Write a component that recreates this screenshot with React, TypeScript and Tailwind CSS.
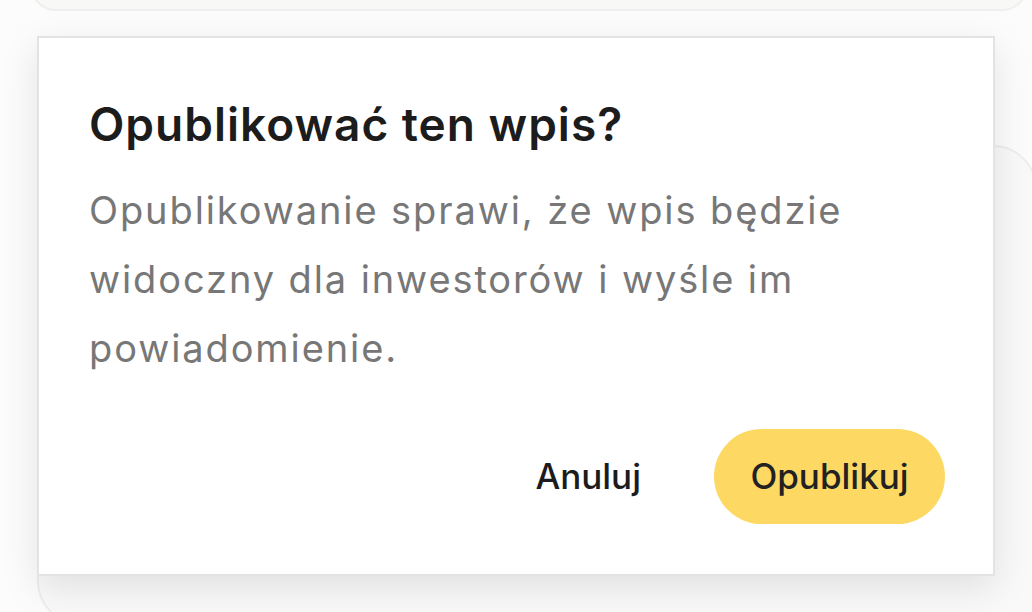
import React from 'react';

const font = { fontFamily: 'Inter, "Noto Sans", sans-serif' };

export default function App() {
  return (
    <div className="relative w-[1032px] h-[612px] overflow-hidden bg-[#fafafa]" style={font}>
      {/* Page behind the dialog */}
      <div className="flex flex-col">
        <div className="mt-[-80px] ml-[30px] w-[998px] h-[91px] rounded-b-[26px] border-2 border-[#e4e4e2] bg-[#f4f4f2]" />
        <div className="mt-[134px] ml-[37px] w-[1000px] h-[480px] rounded-tr-[44px] rounded-bl-[44px] border-2 border-[#e2e2e2] bg-[#f6f6f6]" />
      </div>

      {/* Scrim */}
      <div className="absolute inset-0 bg-white/40" />

      {/* Dialog */}
      <div className="absolute left-[37px] top-[36px] w-[958px] h-[540px] bg-white border-2 border-[#e3e3e3] shadow-[0_12px_36px_rgba(0,0,0,0.10)] pl-[50px] pr-[48px] pt-[56px]">
        <h2 className="text-[46px] font-semibold leading-[60px] text-[#1c1c1c] tracking-[1px]">
          Opublikować ten wpis?
        </h2>
        <p className="mt-[22px] text-[38px] leading-[69px] text-[#777777] tracking-[1.9px] max-w-[800px]">
          Opublikowanie sprawi, że wpis będzie widoczny dla inwestorów i wyśle im powiadomienie.
        </p>
        <div className="flex justify-end items-center gap-[73px] mt-[46px]">
          <button className="text-[35px] font-medium text-[#1c1c1c]">Anuluj</button>
          <button className="w-[231px] h-[95px] rounded-full bg-[#fdd862] text-[35px] font-medium text-[#222]">
            Opublikuj
          </button>
        </div>
      </div>
    </div>
  );
}
